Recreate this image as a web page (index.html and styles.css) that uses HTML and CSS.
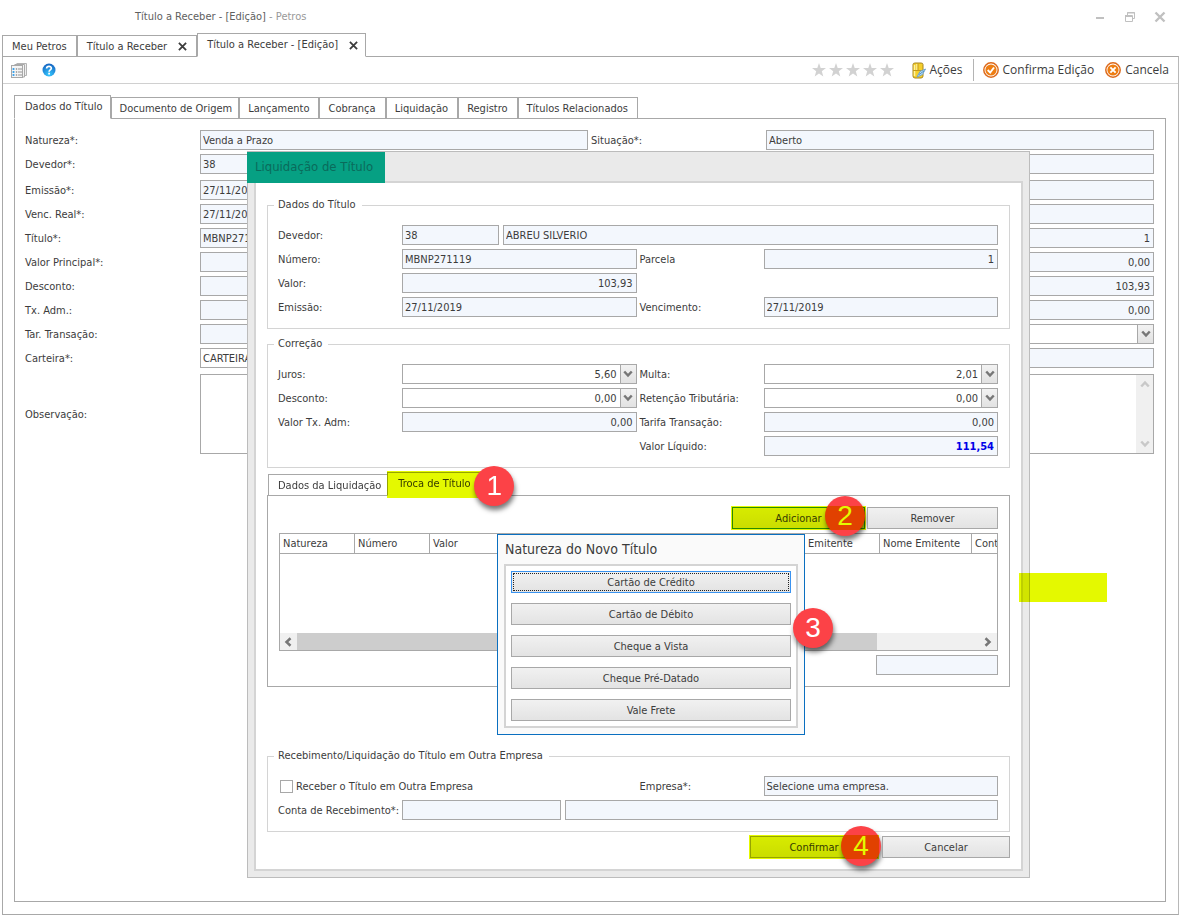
FILE: index.html
```html
<!DOCTYPE html>
<html lang="pt-BR">
<head>
<meta charset="utf-8">
<title>Título a Receber - [Edição] - Petros</title>
<link rel="stylesheet" href="styles.css">
</head>
<body>
<svg class="defs" aria-hidden="true">
  <symbol id="down" viewBox="0 0 8 8"><path d="M1 2 4 5.2 7 2" fill="none" stroke="currentColor" stroke-width="2"/></symbol>
  <symbol id="close" viewBox="0 0 10 10"><path d="M1 1 9 9M9 1 1 9" fill="none" stroke="currentColor" stroke-width="2"/></symbol>
  <symbol id="star" viewBox="0 0 14 14"><path d="M7 0 8.7 5H14L9.8 8.3 11.3 13.6 7 10.4 2.7 13.6 4.2 8.3 0 5H5.3Z" fill="#d2d2d2"/></symbol>
</svg>
<div class="window">
  <header class="titlebar">
    <div class="caption">Título a Receber - [Edição] <span>- Petros</span></div>
    <div class="winbtns">
      <button aria-label="Minimizar"><svg width="12" height="12"><path d="M2 7H10" stroke="#c0c0c0" stroke-width="2"/></svg></button>
      <button aria-label="Restaurar"><svg width="12" height="12"><path d="M3.5 4V1.5H10.5V7.5H9M1 4.5H8.5V10.5H1.5V4.5M1 5.5H9M3 2H11" fill="none" stroke="#c0c0c0"/></svg></button>
      <button aria-label="Fechar"><svg width="12" height="12"><path d="M1.5 1.5 10.5 10.5M10.5 1.5 1.5 10.5" stroke="#c0c0c0" stroke-width="2.4"/></svg></button>
    </div>
  </header>
  <nav class="tabs doc-tabs">
    <button class="tab">Meu Petros</button>
    <button class="tab">Título a Receber <svg width="9" height="9"><use href="#close"/></svg></button>
    <button class="tab active">Título a Receber - [Edição] <svg width="9" height="9"><use href="#close"/></svg></button>
  </nav>
  <main class="frame">
    <div class="toolbar">
      <button aria-label="Registros"><svg width="17" height="17" viewBox="0 0 17 17"><path d="M5.5 1.500H15.500V13.500H13" fill="#eee" stroke="#b4b4b4"/><path d="M3.500 2.500H13.500V15H11.500" fill="#f4f4f4" stroke="#aaa"/><rect x=".5" y="3.500" width="11" height="12" fill="#f5f5f5" stroke="#a8a8a8"/><path d="M2.500 6V14" stroke="#3ea3ea" stroke-width="1.800" stroke-dasharray="2 1"/><path d="M5.500 6V14M8 6V14M10 6V14" stroke="#aaa" stroke-width="1.300" stroke-dasharray="2 1"/></svg></button>
      <button aria-label="Ajuda"><svg width="14" height="14" viewBox="0 0 14 14"><defs><radialGradient id="blue" cx=".5" cy=".85" r=".8"><stop offset="0" stop-color="#35c8ff"/><stop offset="1" stop-color="#1768c4"/></radialGradient></defs><circle cx="7" cy="7" r="6.500" fill="url(#blue)"/><path d="M4.600 5.500C4.700 2.700 9.500 2.800 9.300 5.400 9.200 6.900 7.100 6.900 7.100 8.700" fill="none" stroke="#fff" stroke-width="1.700"/><rect x="6.200" y="9.700" width="1.800" height="1.800" fill="#fff"/></svg></button>
      <div class="spring"></div>
      <div class="stars"><svg><use href="#star"/></svg><svg><use href="#star"/></svg><svg><use href="#star"/></svg><svg><use href="#star"/></svg><svg><use href="#star"/></svg></div>
      <button class="tool"><svg width="14" height="17" viewBox="0 0 14 17"><path d="M1 2.500Q1 1 3 1H9Q11 1 11 2.500V14Q11 16 9 16H3Q1 16 1 14Z" fill="#f5cf2c" stroke="#a8851c"/><path d="M2.500 3V14M5 2V8" stroke="#fff3a0" stroke-width="1.500"/><path d="M1 8.500H11M6 1.500V8" stroke="#c49a18"/><path d="M5 15 8 9.500 13.500 7 10.500 12.500Z" fill="#bfe3fa" stroke="#6fa3cc"/><path d="M7 12.500 12 9" stroke="#4f8ec0"/></svg>Ações</button>
      <i class="divider"></i>
      <button class="tool"><svg width="16" height="16" viewBox="0 0 16 16"><circle cx="8" cy="8" r="7.200" fill="#fff" stroke="#dd6a1c" stroke-width="1.500"/><circle cx="8" cy="8" r="5.600" fill="#ee7d12"/><path d="M4.700 8 7.200 10.600 11 5.500" fill="none" stroke="#fff" stroke-width="1.900"/></svg>Confirma Edição</button>
      <button class="tool last"><svg width="16" height="16" viewBox="0 0 16 16"><circle cx="8" cy="8" r="7.200" fill="#fff" stroke="#dd6a1c" stroke-width="1.500"/><circle cx="8" cy="8" r="5.600" fill="#ee7d12"/><path d="M5.400 5.400 10.600 10.600M10.600 5.400 5.400 10.600" stroke="#fff" stroke-width="1.900"/></svg>Cancela</button>
    </div>
    <div class="content">
      <nav class="tabs record-tabs">
        <button class="tab active">Dados do Título</button><button class="tab">Documento de Origem</button><button class="tab">Lançamento</button><button class="tab">Cobrança</button><button class="tab">Liquidação</button><button class="tab">Registro</button><button class="tab">Títulos Relacionados</button>
      </nav>
      <form class="panel record">
        <div class="row"><label for="nat">Natureza*:</label><input id="nat" value="Venda a Prazo" readonly><label for="sit">Situação*:</label><input id="sit" value="Aberto" readonly></div>
        <div class="row gap-after debtor"><label for="dev">Devedor*:</label><input id="dev" value="38" readonly><input aria-label="Nome do devedor" readonly></div>
        <div class="row"><label for="emi">Emissão*:</label><input id="emi" value="27/11/2019" readonly><span></span><input aria-label="Vencimento" readonly></div>
        <div class="row"><label for="ven">Venc. Real*:</label><input id="ven" value="27/11/2019" readonly><span></span><input aria-label="Dias" readonly></div>
        <div class="row"><label for="tit">Título*:</label><input id="tit" value="MBNP271119" readonly><span></span><input class="num" aria-label="Parcela do título" value="1" readonly></div>
        <div class="row"><label for="vpr">Valor Principal*:</label><input id="vpr" readonly><span></span><input class="num" aria-label="Juros do título" value="0,00" readonly></div>
        <div class="row"><label for="des">Desconto:</label><input id="des" readonly><span></span><input class="num" aria-label="Valor do título" value="103,93" readonly></div>
        <div class="row"><label for="txa">Tx. Adm.:</label><input id="txa" readonly><span></span><input class="num" aria-label="Saldo" value="0,00" readonly></div>
        <div class="row"><label for="tar">Tar. Transação:</label><input id="tar" readonly><span></span><div class="combo"><input aria-label="Tipo"><button type="button" aria-label="Abrir lista"><svg><use href="#down"/></svg></button></div></div>
        <div class="row gap-after"><label for="car">Carteira*:</label><input id="car" value="CARTEIRA"><span></span><input aria-label="Descrição" readonly></div>
        <div class="row notes"><label for="obs">Observação:</label><div class="memo"><textarea id="obs"></textarea><div class="vscroll"><svg class="up"><use href="#down"/></svg><svg><use href="#down"/></svg></div></div></div>
      </form>
    </div>
  </main>

  <section class="modal">
    <h1 class="modal-title"><span>Liquidação de Título</span></h1>
    <form class="modal-body">
      <fieldset><legend>Dados do Título</legend>
        <div class="row two"><label for="m1">Devedor:</label><input id="m1" value="38" readonly><input class="rest" aria-label="Nome" value="ABREU SILVERIO" readonly></div>
        <div class="row"><label for="m2">Número:</label><input id="m2" value="MBNP271119" readonly><label for="m3">Parcela</label><input id="m3" class="num" value="1" readonly></div>
        <div class="row"><label for="m4">Valor:</label><input id="m4" class="num" value="103,93" readonly></div>
        <div class="row"><label for="m5">Emissão:</label><input id="m5" value="27/11/2019" readonly><label for="m6">Vencimento:</label><input id="m6" value="27/11/2019" readonly></div>
      </fieldset>
      <fieldset><legend>Correção</legend>
        <div class="row"><label for="c1">Juros:</label><div class="combo"><input id="c1" class="num" value="5,60"><button type="button" aria-label="Abrir juros"><svg><use href="#down"/></svg></button></div><label for="c2">Multa:</label><div class="combo"><input id="c2" class="num" value="2,01"><button type="button" aria-label="Abrir multa"><svg><use href="#down"/></svg></button></div></div>
        <div class="row"><label for="c3">Desconto:</label><div class="combo"><input id="c3" class="num" value="0,00"><button type="button" aria-label="Abrir desconto"><svg><use href="#down"/></svg></button></div><label for="c4">Retenção Tributária:</label><div class="combo"><input id="c4" class="num" value="0,00"><button type="button" aria-label="Abrir retenção"><svg><use href="#down"/></svg></button></div></div>
        <div class="row"><label for="c5">Valor Tx. Adm:</label><input id="c5" class="num" value="0,00" readonly><label for="c6">Tarifa Transação:</label><input id="c6" class="num" value="0,00" readonly></div>
        <div class="row"><span></span><span></span><label for="c7">Valor Líquido:</label><input id="c7" class="num total" value="111,54" readonly></div>
      </fieldset>
      <div class="exchange">
        <nav class="tabs"><button type="button" class="tab">Dados da Liquidação</button><button type="button" class="tab active marked">Troca de Título<b class="badge b1">1</b></button></nav>
        <div class="panel">
          <div class="actions"><button type="button" class="btn add marked">Adicionar<b class="badge b2 under">2</b></button><button type="button" class="btn">Remover</button></div>
          <div class="grid">
            <table><thead><tr><th>Natureza</th><th>Número</th><th>Valor</th><th></th><th></th><th></th><th></th><th>Emitente</th><th class="wide">Nome Emitente</th><th class="rest">Cont</th></tr></thead></table>
            <div class="hscroll"><svg class="left"><use href="#down"/></svg><i></i><svg class="right"><use href="#down"/></svg></div>
          </div>
          <input class="sum" aria-label="Total" readonly>
        </div>
      </div>
      <fieldset><legend>Recebimento/Liquidação do Título em Outra Empresa</legend>
        <div class="row"><div class="check"><input type="checkbox" id="r1"><label for="r1">Receber o Título em Outra Empresa</label></div><label for="r2">Empresa*:</label><input id="r2" value="Selecione uma empresa." readonly></div>
        <div class="row account"><label for="r3">Conta de Recebimento*:</label><input id="r3" readonly><input class="rest" aria-label="Descrição da conta" readonly></div>
      </fieldset>
      <div class="footer"><button type="button" class="btn marked">Confirmar<b class="badge b4 under">4</b></button><button type="button" class="btn">Cancelar</button></div>
    </form>
    <i class="stray"></i>
    <div class="dialog" role="dialog">
      <h2>Natureza do Novo Título</h2>
      <div class="choices"><button class="btn focus">Cartão de Crédito</button><button class="btn">Cartão de Débito</button><button class="btn">Cheque a Vista</button><button class="btn">Cheque Pré-Datado</button><button class="btn">Vale Frete</button></div>
      <b class="badge b3">3</b>
    </div>
  </section>
</div>
</body>
</html>
```
FILE: styles.css
```css
* { box-sizing: border-box; }
body { margin: 0; background: #fff; color: #3c3c3c; font: 11px/14px "DejaVu Sans Condensed", "DejaVu Sans", sans-serif; }
button, input, textarea { margin: 0; color: inherit; font: inherit; border-radius: 0; outline: 0; }
button { padding: 0; border: 0; background: none; }
svg { display: block; flex: none; }
.defs { position: absolute; width: 0; height: 0; }

.window { position: relative; display: flex; flex-direction: column; min-height: 100vh; padding: 0 1px 1px 2px; }
.titlebar { display: flex; align-items: center; height: 33px; padding: 0 13px 0 133px; }
.caption { flex: 1; color: #606060; }
.caption span { color: #999; }
.winbtns { display: flex; gap: 18px; }

.tabs { position: relative; z-index: 1; display: flex; align-items: flex-end; margin-bottom: -1px; }
.tab { position: relative; display: flex; align-items: center; height: 22px; padding: 1px 7px 0; border: 1px solid #a8a8a8; background: #fff; white-space: nowrap; }
.tab.active { height: 24px; padding-bottom: 1px; border-bottom-color: #fff; }
.doc-tabs .tab { padding-left: 9px; padding-right: 9px; }
.doc-tabs .tab svg { margin-left: 11px; width: 9px; height: 9px; }
.doc-tabs .active { padding-right: 7px; }
.record-tabs .tab { padding-left: 8px; padding-right: 9px; }
.record-tabs .tab:nth-child(2) { padding-right: 6px; }
.record-tabs .active { padding-left: 10px; padding-right: 7px; }

.frame { flex: 1; display: flex; flex-direction: column; border: 1px solid #a8a8a8; border-right-color: #b8b8b8; }
.toolbar { display: flex; align-items: center; height: 27px; padding: 0 9px 0 8px; border-bottom: 1px solid #d0d0d0; font: 12px/16px "Open Sans", sans-serif; }
.toolbar > button + button { margin-left: 14px; }
.toolbar .tool { display: flex; align-items: center; gap: 4px; margin-left: 9px; }
.toolbar .last { margin-left: 11px; }
.spring { flex: 1; }
.stars { display: flex; gap: 3px; margin-right: 9px; }
.stars svg { width: 14px; height: 14px; }
.divider { width: 1px; height: 22px; margin-left: 10px; background: #b4b4b4; }
.content { flex: 1; display: flex; flex-direction: column; padding: 11px 12px 12px 11px; }
.panel { border: 1px solid #a8a8a8; }
.record { flex: 1; padding: 11px 11px 11px 10px; }

.row { display: grid; grid-template-columns: 175px minmax(0, 1fr) 178px minmax(0, 1fr); align-items: center; margin-bottom: 4px; }
.row label { padding-top: 2px; }
.record .row > label:nth-child(3) { padding-left: 3px; }
.record .debtor { grid-template-columns: 175px 96px minmax(0, 1fr); }
.record .gap-after { margin-bottom: 6px; }
.record .notes { grid-template-columns: 175px minmax(0, 1fr); margin: 0; }
.row input, .sum { width: 100%; min-width: 0; height: 20px; padding: 0 3px 0 2px; border: 1px solid #a8a8a8; background: #fff; }
.row input:read-only, .sum { background: #f3f7fd; }
.row .num { text-align: right; }
.row .total { color: #0000e8; font-weight: bold; }
.combo { display: flex; min-width: 0; }
.combo button { flex: none; display: grid; place-items: center; width: 17px; height: 20px; margin-left: -1px; border: 1px solid #a8a8a8; background: linear-gradient(#f2f2f2, #e2e2e2); color: #777; }
.combo svg, .vscroll svg, .hscroll svg { width: 10px; height: 10px; }
.memo { display: flex; height: 80px; border: 1px solid #a8a8a8; }
.memo textarea { flex: 1; padding: 3px; border: 0; resize: none; background: #fff; }
.vscroll { display: flex; flex-direction: column; align-items: center; justify-content: space-between; width: 17px; padding: 4px 0; background: #f0f0f0; color: #c8c8c8; }
.vscroll .up { transform: rotate(180deg); }

.modal { position: absolute; z-index: 2; left: 247px; right: 150px; top: 151px; padding: 0 6px 6px; border: 1px solid #bcbcbc; background: #eaeaea; }
.modal-title { display: flex; margin: 0 -6px; font-size: 13px; font-weight: normal; line-height: 30px; }
.modal-title span { position: relative; margin: 0 0 -1px -1px; padding: 0 12px 1px 8px; background: #06a083; color: #0a6b5b; }
.modal-body { display: flex; flex-direction: column; margin-top: -1px; padding: 14px 11px 11px; border: 2px solid #d4d4d4; background: #fff; }
fieldset { min-width: 0; margin: 0 0 7px; padding: 12px 11px 7px 10px; border: 1px solid #d4d4d4; }
legend { height: 16px; padding: 0 6px 0 4px; margin-left: -4px; line-height: 16px; }
.modal .row { grid-template-columns: 124px minmax(0, 1fr) 127px minmax(0, 1fr); }
.modal .row > label:nth-child(3) { padding-left: 3px; }
.modal .two { grid-template-columns: 124px 97px minmax(0, 1fr); }
.modal .account { grid-template-columns: 124px 159px minmax(0, 1fr); }
.modal .row .rest { width: auto; margin-left: 4px; }
.check { grid-column: 1 / 3; display: flex; align-items: center; gap: 3px; padding-left: 2px; }
.row .check input { appearance: none; width: 13px; height: 13px; padding: 0; background: #fff; }
.modal .check + label { padding-left: 3px; }

.exchange { margin: -5px 0 61px; }
.exchange .tabs { height: 26px; padding-left: 1px; }
.exchange .tab { padding: 1px 6px 0 9px; }
.exchange .tab.active { width: 110px; height: 24px; padding-bottom: 1px; padding-left: 10px; margin-left: -1px; }
.exchange .panel { display: flex; flex-direction: column; padding: 11px; }
.actions { display: flex; justify-content: flex-end; gap: 2px; margin-bottom: 4px; }
.btn { position: relative; height: 22px; padding-top: 1px; border: 1px solid #a8a8a8; background: linear-gradient(#f1f1f1, #e3e3e3); text-align: center; }
.actions .btn { width: 131px; }
.actions .add { width: 133px; border-color: #2e8f20; }
.grid { height: 118px; display: flex; flex-direction: column; justify-content: space-between; overflow: hidden; border: 1px solid #a8a8a8; }
table { width: 100%; table-layout: fixed; border-collapse: separate; border-spacing: 0; }
th { width: 75px; height: 20px; padding: 0 3px; border: solid #a8a8a8; border-width: 0 1px 1px 0; font-weight: normal; text-align: left; white-space: nowrap; }
.wide { width: 92px; }
th.rest { width: auto; padding-right: 0; border-right: 0; }
.hscroll { display: flex; align-items: center; height: 17px; background: #f0f0f0; color: #777; }
.hscroll i { flex: 1; height: 17px; margin-right: 106px; background: #cdcdcd; }
.hscroll .left { margin: 0 4px 0 3px; transform: rotate(90deg); }
.hscroll .right { margin-right: 4px; transform: rotate(-90deg); }
.sum { align-self: flex-end; width: 122px; margin-top: 4px; }
.footer { display: flex; justify-content: flex-end; gap: 4px; margin-top: -3px; }
.footer .btn { width: 128px; }

.marked::after, .stray { content: ""; position: absolute; z-index: 1; inset: -1px; background: #e4f900; mix-blend-mode: multiply; }
.btn.marked::after { inset: -2px; }
.tab.marked::after { inset: -2px 0 -3px -1px; }
.stray { inset: 421px -78px auto auto; width: 88px; height: 29px; }
.badge { position: absolute; z-index: 2; display: grid; place-items: center; width: 40px; height: 40px; border-radius: 50%; background: #fc4247; box-shadow: 1px 4px 5px #0008; color: #fff; font: 28px/40px "Liberation Sans", sans-serif; }
.under { z-index: 0; }
.b1 { right: -18px; top: -7px; }
.b2 { right: -1px; top: -12px; }
.b4 { right: -4px; top: -11px; }
.b3 { right: -29px; top: 73px; }

.dialog { position: absolute; z-index: 3; left: 249px; top: 382px; width: 308px; padding: 0 6px 6px; border: 1px solid #0a6fc0; background: #fafafa; }
.dialog h2 { margin: 0; padding-left: 1px; font-size: 14px; font-weight: normal; line-height: 29px; }
.choices { display: flex; flex-direction: column; gap: 10px; padding: 5px; border: 2px solid #d4d4d4; background: #fff; }
.btn.focus { border-color: #3a93f0; outline: 1px dotted #222; outline-offset: -3px; }
```
